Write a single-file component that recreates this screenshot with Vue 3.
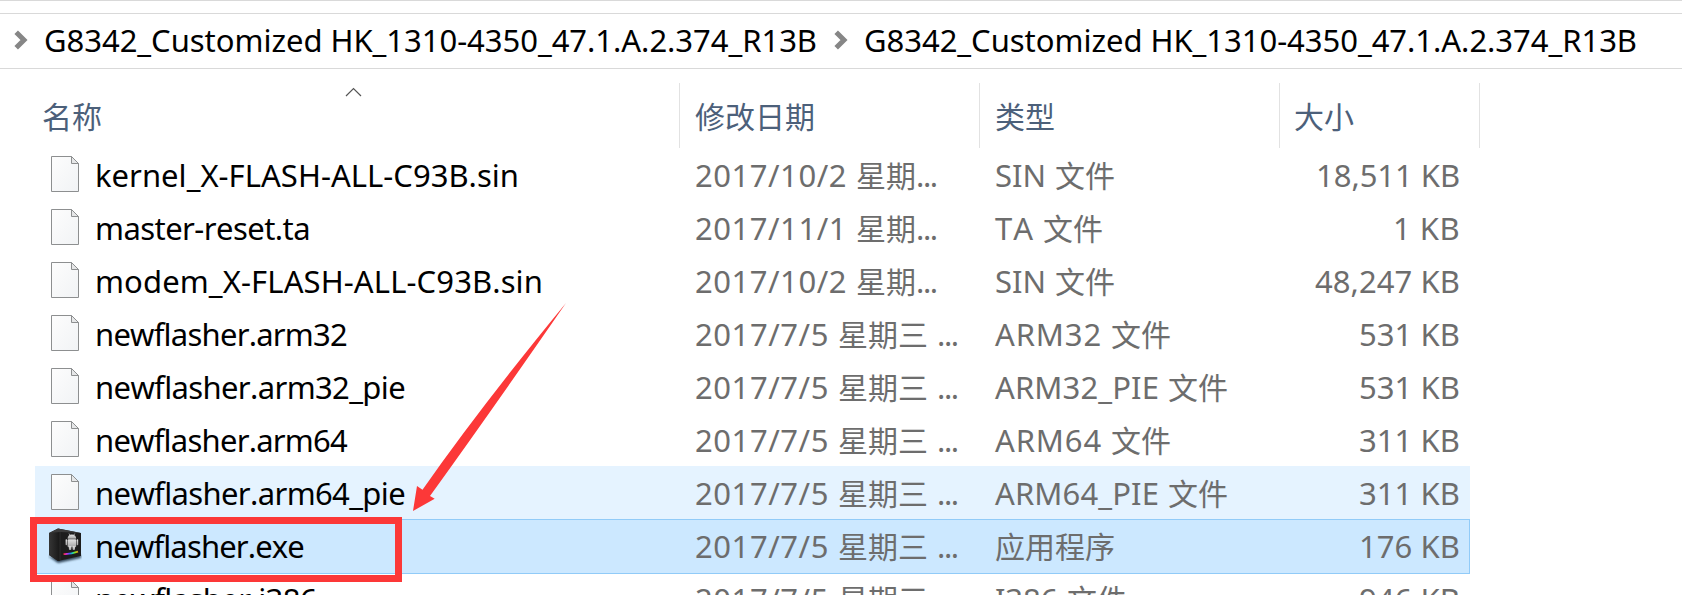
<script setup>
const folder = 'G8342_Customized HK_1310-4350_47.1.A.2.374_R13B'
const crumbs = [folder, folder]

const columns = [
  { key: 'name', title: '名称', sorted: true },
  { key: 'date', title: '修改日期' },
  { key: 'type', title: '类型' },
  { key: 'size', title: '大小' }
]

const july = { date: '2017/7/5', dateW: 134, day: '星期三', gap: true }
const rows = [
  { name: 'kernel_X-FLASH-ALL-C93B.sin', w: 424, date: '2017/10/2', dateW: 152, day: '星期', ext: 'SIN', extW: 51, kind: '文件', size: '18,511 KB', sizeW: 144 },
  { name: 'master-reset.ta', w: 215, date: '2017/11/1', dateW: 152, day: '星期', ext: 'TA', extW: 39, kind: '文件', size: '1 KB', sizeW: 67 },
  { name: 'modem_X-FLASH-ALL-C93B.sin', w: 448, date: '2017/10/2', dateW: 152, day: '星期', ext: 'SIN', extW: 51, kind: '文件', size: '48,247 KB', sizeW: 145 },
  { name: 'newflasher.arm32', w: 252, ...july, ext: 'ARM32', extW: 107, kind: '文件', size: '531 KB', sizeW: 101 },
  { name: 'newflasher.arm32_pie', w: 310, ...july, ext: 'ARM32_PIE', extW: 164, kind: '文件', size: '531 KB', sizeW: 101 },
  { name: 'newflasher.arm64', w: 252, ...july, ext: 'ARM64', extW: 107, kind: '文件', size: '311 KB', sizeW: 101 },
  { name: 'newflasher.arm64_pie', w: 310, ...july, ext: 'ARM64_PIE', extW: 164, kind: '文件', size: '311 KB', sizeW: 101, state: 'hover' },
  { name: 'newflasher.exe', w: 209, ...july, ext: '', kind: '应用程序', size: '176 KB', sizeW: 101, state: 'selected', app: true },
  { name: 'newflasher.i386', w: 222, ...july, ext: 'I386', extW: 63, kind: '文件', size: '946 KB', sizeW: 101 }
]

// Tracks a run of text so that it occupies the given width.
const vFit = {
  mounted(el, { value }) {
    if (!value) return
    const apply = () => {
      el.style.letterSpacing = '0px'
      const natural = el.getBoundingClientRect().width
      el.style.letterSpacing = (value - natural) / el.textContent.length + 'px'
    }
    apply()
    document.fonts.ready.then(apply)
  }
}
</script>

<template>
  <main class="explorer">
    <nav class="address">
      <div v-for="(c, i) in crumbs" :key="i" class="crumb">
        <svg class="chevron" width="14" height="20" viewBox="0 0 14 20">
          <path d="M2.2 2.2 L10 10 L2.2 17.8" fill="none" stroke="#868686" stroke-width="5" />
        </svg>
        <span v-fit="773" class="run">{{ c }}</span>
      </div>
    </nav>

    <header class="head">
      <div v-for="c in columns" :key="c.key" class="th" :class="c.key">
        <span>{{ c.title }}</span>
        <svg v-if="c.sorted" class="sort" width="17" height="10" viewBox="0 0 17 10">
          <path d="M1 9 L8.5 1.5 L16 9" fill="none" stroke="#555" stroke-width="1.2" />
        </svg>
      </div>
    </header>

    <section class="list">
      <div v-for="r in rows" :key="r.name" class="row" :class="r.state">
        <div class="cell name">
          <svg v-if="r.app" class="icon app" width="34" height="38" viewBox="0 0 34 38">
            <defs>
              <linearGradient id="rainbow">
                <stop offset="0" stop-color="#f33" />
                <stop offset=".2" stop-color="#e02bd8" />
                <stop offset=".42" stop-color="#375cff" />
                <stop offset=".62" stop-color="#19d7b0" />
                <stop offset=".8" stop-color="#8be51c" />
                <stop offset="1" stop-color="#e59019" />
              </linearGradient>
              <linearGradient id="side" x2="1">
                <stop offset="0" stop-color="#363636" />
                <stop offset="1" stop-color="#171717" />
              </linearGradient>
              <linearGradient id="robot" x2="0" y2="1">
                <stop offset="0" stop-color="#e2e2e2" />
                <stop offset="1" stop-color="#a4a4a4" />
              </linearGradient>
              <filter id="soft" x="-20%" y="-50%" width="140%" height="200%"><feGaussianBlur stdDeviation="1.3" /></filter>
            </defs>
            <path d="M0 28 L10 35 L33 30 L33 27 L10 30Z" fill="#35495c" filter="url(#soft)" />
            <path d="M1 5 L10 .5 L33 5 V28 L10 33 L1 27Z" fill="#1d1d1d" />
            <path d="M1 5 L12 4 L12 32.6 L10 33 L1 27Z" fill="url(#side)" />
            <path d="M1 5 L10 .5 L33 5 L12 4Z" fill="#3b3b3b" />
            <path d="M12 4 V32" stroke="#383838" stroke-width=".7" />
            <g fill="url(#robot)">
              <path d="M19.6 10.8 Q19.6 6.8 23.8 6.6 Q28.2 6.8 28.2 10.8Z" />
              <rect x="19.6" y="11.3" width="8.6" height="8" rx="1" />
              <rect x="17.6" y="11.3" width="1.5" height="6" rx=".7" />
              <rect x="28.7" y="11.3" width="1.5" height="6" rx=".7" />
              <rect x="20.9" y="18" width="2.4" height="4" rx="1" />
              <rect x="24.6" y="18" width="2.4" height="4" rx="1" />
            </g>
            <path d="M21 5.5 L22 7.3 M26.8 5.5 L25.8 7.3" stroke="#ccc" stroke-width=".7" />
            <path d="M15.5 26 Q23 26.3 30 23.6" fill="none" stroke="url(#rainbow)" stroke-width="1.7" />
          </svg>
          <svg v-else class="icon" width="28" height="36" viewBox="0 0 28 36">
            <defs>
              <linearGradient id="paper" x2="1" y2="1">
                <stop offset="0" stop-color="#fdfdfd" />
                <stop offset="1" stop-color="#f1f3f5" />
              </linearGradient>
            </defs>
            <path d="M.5 .5 H20.5 L27.5 7.5 V35.5 H.5Z" fill="url(#paper)" stroke="#8d8f90" />
            <path d="M20.5 .5 V7.5 H27.5Z" fill="#e6e7e8" stroke="#8d8f90" />
          </svg>
          <span v-fit="r.w" class="run">{{ r.name }}</span>
        </div>
        <div class="cell date">
          <span v-fit="r.dateW" class="run">{{ r.date }}</span>
          <span class="cjk">{{ r.day }}</span>
          <span class="dots" :class="{ spaced: r.gap }">...</span>
        </div>
        <div class="cell type">
          <span v-if="r.ext" v-fit="r.extW" class="run">{{ r.ext }}</span>
          <span class="cjk" :class="{ alone: !r.ext }">{{ r.kind }}</span>
        </div>
        <div class="cell size"><span v-fit="r.sizeW" class="run">{{ r.size }}</span></div>
      </div>
    </section>

    <div class="marker"></div>
    <svg class="arrow" width="156" height="212" viewBox="412 301 156 212">
      <path d="M413 511 L417 486 L422.5 489.7 Q482 405 566 303 Q492 410 430 496 L434.7 498.7Z" fill="#fc3838" />
    </svg>
  </main>
</template>

<style>
html, body { background: #fff; overflow: hidden; }
</style>

<style scoped>
.explorer {
  position: relative;
  width: 1682px;
  height: 595px;
  overflow: hidden;
  box-sizing: border-box;
  border-top: 1px solid #d9d9d9;
  background: #fff;
  color: #000;
  font: 31px/53px "Noto Sans", "Noto Sans CJK SC", sans-serif;
}
.run { display: inline-block; white-space: pre; flex: none; font-kerning: none; }
.cjk { font-family: "Noto Sans CJK SC", sans-serif; font-size: 30px; line-height: 40px; }
.address {
  display: flex;
  height: 56px;
  margin-top: 12px;
  box-sizing: border-box;
  border-top: 1px solid #d9d9d9;
  border-bottom: 1px solid #d9d9d9;
  padding-left: 14px;
  gap: 17px;
}
.crumb { display: flex; align-items: center; gap: 16px; height: 52px; }
.crumb .chevron { flex: none; }
.head { display: flex; margin-top: 14px; height: 65px; color: #4c607a; font: 30px/64px "Noto Sans CJK SC", sans-serif; }
.th { position: relative; box-sizing: border-box; border-right: 1px solid #e2e2e2; padding-left: 15px; white-space: nowrap; }
.th.name { width: 680px; padding-left: 42px; }
.th.date, .th.type { width: 300px; }
.th.size { width: 200px; padding-left: 14px; }
.sort { position: absolute; left: 345px; top: 4px; }
.list { margin-left: 35px; width: 1435px; }
.row { display: flex; height: 53px; }
.row.hover { background: #e5f3ff; }
.row.selected { background: #cce8ff; box-shadow: inset 0 0 0 1px #91cbf8; height: 55px; margin-bottom: -2px; }
.cell { display: flex; align-items: baseline; box-sizing: border-box; height: 53px; padding-top: 1px; white-space: nowrap; color: #6d6d6d; }
.cell.name { width: 645px; padding-left: 16px; align-items: flex-start; color: #000; }
.icon { flex: none; margin: 7px 16px 0 0; }
.icon.app { margin: 8px 13px 0 -3px; }
.cell.date { width: 300px; padding-left: 15px; }
.cell.date .cjk { margin-left: 9px; }
.dots { letter-spacing: -1.4px; }
.dots.spaced { margin-left: 9px; }
.cell.type { width: 300px; padding-left: 15px; gap: 9px; }
.cjk.alone { line-height: 51px; }
.cell.size { width: 190px; padding-right: 10px; justify-content: flex-end; }
.marker { position: absolute; left: 30px; top: 516px; width: 372px; height: 65px; box-sizing: border-box; border: 7px solid #fc3838; }
.arrow { position: absolute; left: 412px; top: 300px; }
</style>
